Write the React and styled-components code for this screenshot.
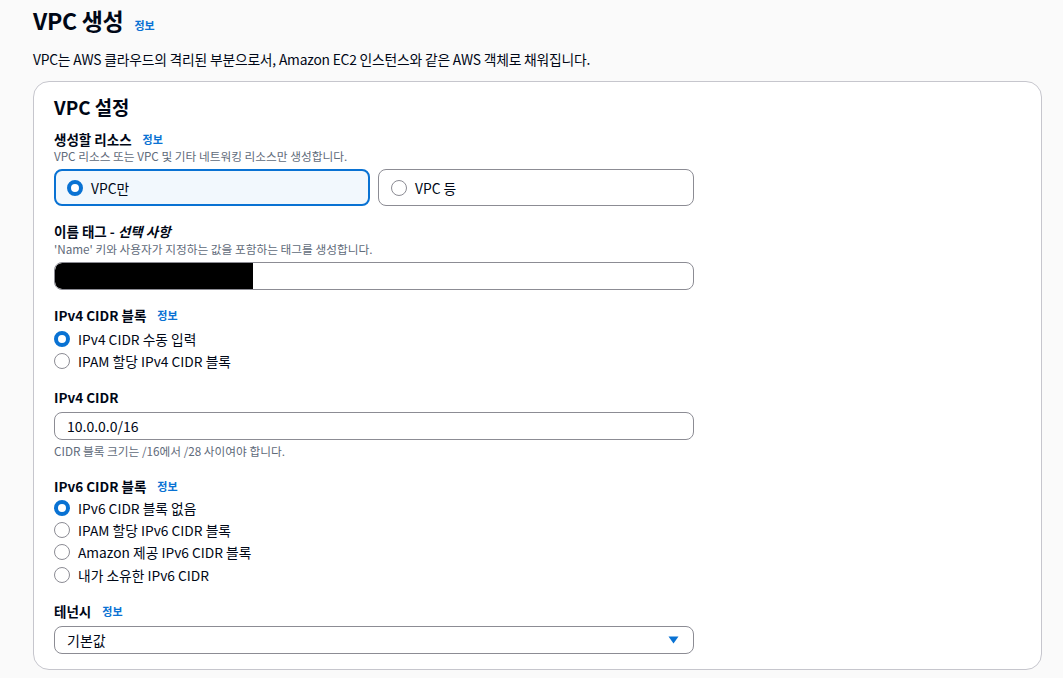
import styled, { createGlobalStyle } from 'styled-components';

const GlobalStyle = createGlobalStyle`
  html, body {
    margin: 0;
    padding: 0;
    background: #fafafa;
  }
  body {
    font-family: "Noto Sans CJK KR", "Noto Sans", sans-serif;
    color: #000716;
  }
  * { box-sizing: border-box; }
`;

const Page = styled.div`
  padding: 2px 21px 8px 33px;
`;

const TitleRow = styled.div`
  display: flex;
  align-items: baseline;
  gap: 11px;
`;

const PageTitle = styled.h1`
  margin: 0;
  font-size: 23px;
  line-height: 36px;
  font-weight: 700;
  letter-spacing: -0.3px;
`;

const InfoLink = styled.a`
  color: #0972d3;
  font-size: 11px;
  font-weight: 700;
  text-decoration: none;
  cursor: pointer;
`;

const PageDesc = styled.p`
  margin: 11px 0 12px;
  font-size: 13.8px;
  line-height: 20px;
  letter-spacing: -0.2px;
`;

const Card = styled.section`
  background: #fff;
  border: 1px solid #c6c6cd;
  border-radius: 16px;
  padding: 12px 20px 15px;
`;

const CardTitle = styled.h2`
  margin: 0 0 10px;
  font-size: 18.8px;
  line-height: 26px;
  font-weight: 700;
`;

const Form = styled.div`
  width: 640px;
  display: flex;
  flex-direction: column;
`;

const Field = styled.div`
  display: flex;
  flex-direction: column;
  margin-bottom: ${p => p.$gap ?? 16}px;
`;

const LabelRow = styled.div`
  display: flex;
  align-items: center;
  gap: 11px;
  height: 18px;
`;

const Label = styled.span`
  font-size: 13.5px;
  font-weight: 700;
  em { font-style: italic; }
`;

const Description = styled.div`
  font-size: 11.7px;
  line-height: 16px;
  color: #5f6b7a;
  margin-top: ${p => p.$top ?? 0}px;
`;

const Tiles = styled.div`
  display: grid;
  grid-template-columns: 1fr 1fr;
  gap: 8px;
  margin-top: 5px;
`;

const Tile = styled.label`
  display: flex;
  align-items: center;
  gap: 8px;
  height: 37px;
  padding: 0 ${p => (p.$checked ? 11 : 12)}px;
  border: ${p => (p.$checked ? '2px solid #0972d3' : '1px solid #8c8c94')};
  background: ${p => (p.$checked ? '#f2f8fd' : '#fff')};
  border-radius: 8px;
  font-size: 13.8px;
`;

const RadioDot = styled.span`
  width: 16px;
  height: 16px;
  flex: none;
  border-radius: 50%;
  background: #fff;
  border: ${p => (p.$checked ? '4.5px solid #0972d3' : '1.5px solid #8c8c94')};
`;

const RadioList = styled.div`
  display: flex;
  flex-direction: column;
  margin-top: ${p => p.$top ?? 4}px;
`;

const RadioRow = styled.label`
  display: flex;
  align-items: center;
  gap: 8px;
  height: 22.3px;
  font-size: 13.75px;
`;

const Input = styled.div`
  height: 28px;
  margin-top: ${p => p.$top ?? 6}px;
  border: 1px solid #8c8c94;
  border-radius: 8px;
  background: #fff;
  display: flex;
  align-items: center;
  padding: 0 12px;
  font-size: 14px;
  overflow: hidden;
`;

const NameInput = styled(Input)`
  padding: 0;
`;

const Redacted = styled.span`
  width: 198px;
  height: 100%;
  background: #000;
  border-radius: 7px 0 0 7px;
`;

const Select = styled(Input)`
  justify-content: space-between;
  padding: 0 14px 0 12px;
`;

function Caret() {
  return (
    <svg width="11" height="8" viewBox="0 0 11 8">
      <path d="M0.5 0.5 L10.5 0.5 L5.5 7.5 Z" fill="#0972d3" />
    </svg>
  );
}

function Radio({ checked, children }) {
  return (
    <RadioRow>
      <RadioDot $checked={checked} />
      {children}
    </RadioRow>
  );
}

export default function App() {
  return (
    <>
      <GlobalStyle />
      <Page>
        <TitleRow>
          <PageTitle>VPC 생성</PageTitle>
          <InfoLink>정보</InfoLink>
        </TitleRow>
        <PageDesc>VPC는 AWS 클라우드의 격리된 부분으로서, Amazon EC2 인스턴스와 같은 AWS 객체로 채워집니다.</PageDesc>

        <Card>
          <CardTitle>VPC 설정</CardTitle>
          <Form>
            <Field>
              <LabelRow>
                <Label>생성할 리소스</Label>
                <InfoLink>정보</InfoLink>
              </LabelRow>
              <Description>VPC 리소스 또는 VPC 및 기타 네트워킹 리소스만 생성합니다.</Description>
              <Tiles>
                <Tile $checked>
                  <RadioDot $checked />
                  VPC만
                </Tile>
                <Tile>
                  <RadioDot />
                  VPC 등
                </Tile>
              </Tiles>
            </Field>

            <Field>
              <LabelRow>
                <Label>이름 태그 - <em>선택 사항</em></Label>
              </LabelRow>
              <Description $top={1}>'Name' 키와 사용자가 지정하는 값을 포함하는 태그를 생성합니다.</Description>
              <NameInput $top={5}>
                <Redacted />
              </NameInput>
            </Field>

            <Field $gap={15}>
              <LabelRow>
                <Label>IPv4 CIDR 블록</Label>
                <InfoLink>정보</InfoLink>
              </LabelRow>
              <RadioList $top={4}>
                <Radio checked>IPv4 CIDR 수동 입력</Radio>
                <Radio>IPAM 할당 IPv4 CIDR 블록</Radio>
              </RadioList>
            </Field>

            <Field $gap={18}>
              <LabelRow>
                <Label>IPv4 CIDR</Label>
              </LabelRow>
              <Input>10.0.0.0/16</Input>
              <Description $top={3}>CIDR 블록 크기는 /16에서 /28 사이여야 합니다.</Description>
            </Field>

            <Field>
              <LabelRow>
                <Label>IPv6 CIDR 블록</Label>
                <InfoLink>정보</InfoLink>
              </LabelRow>
              <RadioList $top={2}>
                <Radio checked>IPv6 CIDR 블록 없음</Radio>
                <Radio>IPAM 할당 IPv6 CIDR 블록</Radio>
                <Radio>Amazon 제공 IPv6 CIDR 블록</Radio>
                <Radio>내가 소유한 IPv6 CIDR</Radio>
              </RadioList>
            </Field>

            <Field $gap={0}>
              <LabelRow>
                <Label>테넌시</Label>
                <InfoLink>정보</InfoLink>
              </LabelRow>
              <Select>
                기본값
                <Caret />
              </Select>
            </Field>
          </Form>
        </Card>
      </Page>
    </>
  );
}
